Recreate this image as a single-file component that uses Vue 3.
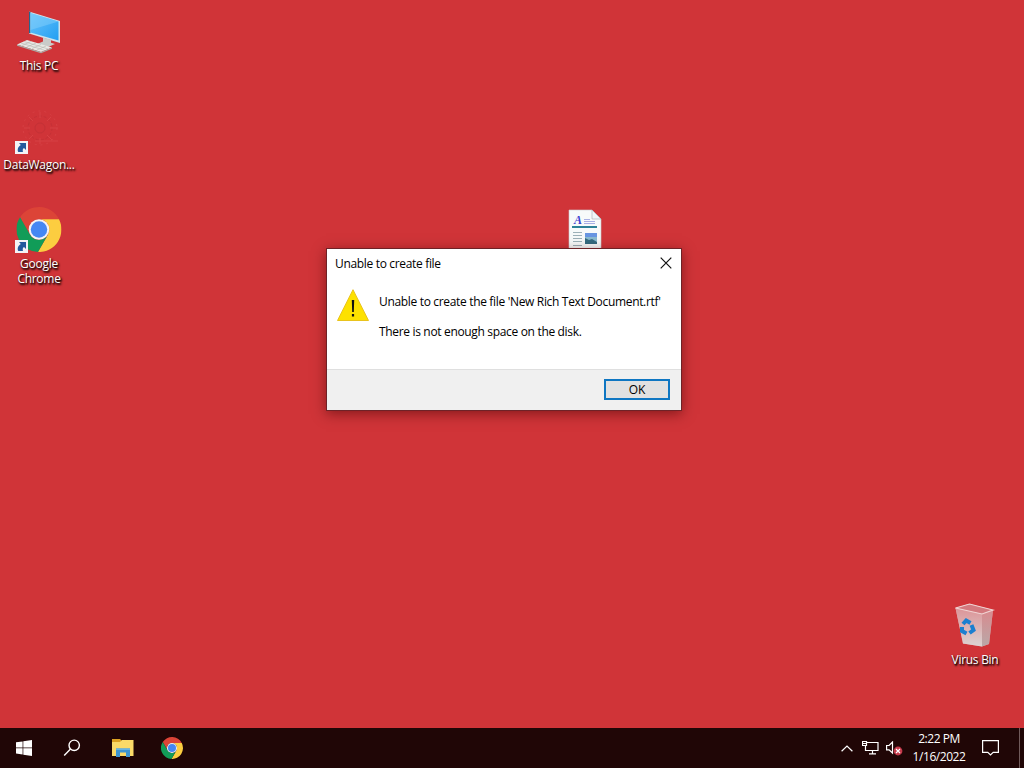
<template>
  <div class="screen">
    <!-- shared shapes -->
    <svg class="defs" aria-hidden="true">
      <symbol id="chrome" viewBox="0 0 48 48">
        <path fill="#dc4437" d="M24 13H45.3A24 24 0 0 0 3.8 11L14.5 29.5A11 11 0 0 1 24 13Z" />
        <path fill="#fccd40" d="M33.5 29.5L22.9 48A24 24 0 0 0 45.3 13H24A11 11 0 0 1 33.5 29.5Z" />
        <path fill="#119c58" d="M14.5 29.5L3.8 11A24 24 0 0 0 22.9 48L33.5 29.5A11 11 0 0 1 14.5 29.5Z" />
        <circle cx="24" cy="24" r="11" fill="#f4f4f4" />
        <circle cx="24" cy="24" r="8.8" fill="#4587f3" />
      </symbol>
      <symbol id="shortcut" viewBox="0 0 13 13">
        <path fill="#f3f3f5" d="M0 0h13v13H0z" />
        <path fill="#23599c" d="M4 2h7v7L9 7C7.500 8 7.500 9.500 8 11H3.300C2 8.500 3 5.500 5.800 3.900z" />
      </symbol>
    </svg>

    <main class="desktop">
      <div class="item" :class="item.id" v-for="item in items" :key="item.id">
        <svg class="icon" viewBox="0 0 48 48">
          <g v-if="item.id === 'pc'" transform="translate(-1 0)">
            <path fill="#cfe3ec" d="M15 3.500L46 13v22L15 25.500z" />
            <path fill="#28658c" d="M15 3.500l1.500.5v21.300l-1.500-.4z" />
            <path fill="url(#pcScreen)" d="M16.500 5L44.500 13.500v19L16.500 24.500z" />
            <path fill="#8ad2fb" opacity=".45" d="M16.500 5L44.500 13.500 16.500 22z" />
            <path fill="#c9cbc9" d="M29 29.500l8 2.300v3l4 1.200-7 3-11-3 6-2.600z" />
            <path fill="#e8e8e4" d="M13 32l25 7.500-11 4.500L3 36.500z" />
            <path fill="#a9aaa6" d="M3 36.500L27 44l11-4.500v1.200L27 45.300 3 37.700z" />
            <path
              stroke="#b5b5b0"
              stroke-width=".6"
              fill="none"
              d="M10 33.500l24 7.400M7 35l23 7.100M17 33.500l-9 4M22 35l-9 4M27 36.500l-9 4M32 38l-9 4"
            />
          </g>
          <g v-else-if="item.id === 'wagon'" fill="none" stroke="#bd3036" stroke-width="1" opacity=".6">
            <circle cx="25" cy="21" r="12" stroke-dasharray="3 2" />
            <circle cx="25" cy="21" r="17" stroke="#dc4a4d" stroke-dasharray="2 4" />
            <circle cx="25" cy="21" r="5" />
            <path stroke="#dc4a4d" d="M25 5v6M25 31v6M9 21h6M35 21h8M14 10l4 4M32 28l5 5M36 10l-4 4M18 28l-4 4" />
            <path stroke="#dc4a4d" d="M20 34h23" />
          </g>
          <use v-else-if="item.id === 'browser'" href="#chrome" x="1.500" y="1" width="45" height="45" />
          <g v-else-if="item.id === 'rtf'">
            <path fill="#f7fafa" stroke="#c9cfd2" stroke-width=".6" d="M8 3h23l9 9v34H8z" />
            <path fill="#f1f6f8" stroke="#a1acb3" stroke-width=".6" d="M31 3v9h9z" />
            <text x="13" y="17" class="letter">A</text>
            <path stroke="#939ce0" stroke-width=".8" d="M23 12.500h6M23 14.500h11M23 16.500h11" />
            <path fill="#2c8197" d="M11 19h25v2H11z" />
            <path stroke="#9cb1b8" d="M12 25.500h9M12 28.500h9M12 31.500h9M12 34.500h9M12 38.500h9" />
            <path fill="#6896e2" d="M24 26h12v4H24z" />
            <path fill="#8abbd0" d="M24 30h12v7H24z" />
            <path fill="#346b80" d="M24 31l4 2 3-1 5 3v2H24z" />
          </g>
          <g v-else transform="translate(-.5 0)">
            <path fill="#df9ea0" d="M5 6l14-4 23.500 6-4 34-7 2.500-19-3z" />
            <path fill="#d3797e" d="M5 6l14-4 23.500 6-11 4z" />
            <path fill="url(#binFace)" d="M5 6l26.500 6v32.500l-19-3z" />
            <path fill="url(#binSide)" d="M31.500 12l11-4-4 34-7 2.500z" />
            <path fill="none" stroke="#f0d4d3" stroke-width="1.200" d="M5 6l14-4 23.500 6-11 4z" />
            <g fill="none" stroke="#1c7fd0" stroke-width="4">
              <path d="M12.500 22l3.200-3.500 4.300 2.500" />
              <path d="M21 23l2 5-4 3" />
              <path d="M16 31.500l-4.500-2.500V25" />
            </g>
          </g>
          <defs>
            <linearGradient id="pcScreen" x1="0" y1="0" x2="1" y2="1">
              <stop offset="0" stop-color="#67c2fb" />
              <stop offset="1" stop-color="#239ff2" />
            </linearGradient>
            <linearGradient id="binFace" x1="0" y1="0" x2="0" y2="1">
              <stop offset="0" stop-color="#dc9498" />
              <stop offset="1" stop-color="#dcd3d2" />
            </linearGradient>
            <linearGradient id="binSide" x1="0" y1="0" x2="0" y2="1">
              <stop offset="0" stop-color="#d98a8e" />
              <stop offset="1" stop-color="#b9a8a8" />
            </linearGradient>
          </defs>
          <use v-if="item.shortcut" href="#shortcut" x="0" y="34" width="13" height="13" />
        </svg>
        <span class="label" v-for="line in item.lines" :key="line">{{ line }}</span>
      </div>

      <section v-if="open" class="dialog" role="alertdialog">
        <header class="titleBar">
          <span>Unable to create file</span>
          <button class="close" type="button" aria-label="Close" @click="open = false">
            <svg viewBox="0 0 12 12" width="12" height="12">
              <path d="M.7.7l10.600 10.600M11.300.7L.7 11.300" stroke="#111" stroke-width="1.200" />
            </svg>
          </button>
        </header>
        <div class="content">
          <svg class="warning" viewBox="0 0 32 32">
            <path fill="#fde100" stroke="#e7bd12" stroke-width=".9" stroke-linejoin="round" d="M16 .7L31.500 31.500H.5z" />
            <path fill="#111" d="M14.800 11h2.400l-.4 12h-1.600zM14.900 25h2.200v2.500h-2.200z" />
          </svg>
          <div class="message">
            <p>Unable to create the file 'New Rich Text Document.rtf'</p>
            <p>There is not enough space on the disk.</p>
          </div>
        </div>
        <footer class="actions">
          <button class="ok" type="button" @click="open = false">OK</button>
        </footer>
      </section>
    </main>

    <nav class="taskbar">
      <button class="task" type="button" aria-label="Start">
        <svg viewBox="0 0 16 16" width="16" height="16" fill="#fff">
          <path d="M0 2.300l6.600-.9v6.200H0zM7.300 1.300L16 0v7.600H7.300zM0 8.300h6.600v6.200L0 13.600zM7.300 8.300H16V16l-8.700-1.300z" />
        </svg>
      </button>
      <button class="task" type="button" aria-label="Search">
        <svg viewBox="0 0 18 18" width="18" height="18" fill="none" stroke="#fff" stroke-width="1.400">
          <circle cx="11.200" cy="6.300" r="5.200" />
          <path d="M7.500 10L1.200 16.500" />
        </svg>
      </button>
      <button class="task explorer" type="button" aria-label="File Explorer">
        <svg viewBox="0 0 22 18" width="22" height="18">
          <path fill="#dda222" d="M0 0h8l2 2h11v4H0z" />
          <path fill="#fbda68" d="M0 3h8l2-2h11.500v16H0z" />
          <path fill="#3d94d1" d="M4 9.500h14V18h-4v-4.500H8V18H4z" />
          <path fill="#67b5e4" d="M4 9.500h14v1.500H4z" />
        </svg>
      </button>
      <button class="task" type="button" aria-label="Google Chrome">
        <svg width="22" height="22"><use href="#chrome" width="22" height="22" /></svg>
      </button>

      <div class="tray">
        <svg class="chevron" viewBox="0 0 12 7" width="12" height="7">
          <path d="M.6 6.300L6 1l5.400 5.300" />
        </svg>
        <svg class="network" viewBox="0 0 17 14" width="17" height="14">
          <path d="M5 1.500h11v8H3.500V5M10.500 9.500v3M7 12.800h7M.5.500h4v4h-4zM1 2.500h3" />
        </svg>
        <svg class="sound" viewBox="0 0 17 15" width="17" height="15">
          <path d="M.6 4.500h2.500L6.500 1v11L3.100 8.800H.6z" />
          <circle cx="12" cy="10" r="4.400" fill="#c63a4b" stroke="none" />
          <path d="M10 8l4 4M14 8l-4 4" />
        </svg>
        <div class="clock">
          <span>{{ time }}</span>
          <span>{{ date }}</span>
        </div>
        <svg class="notify" viewBox="0 0 17 16" width="17" height="16">
          <path d="M.6.6h15.800v11.800h-5.200L8.500 15l-2.700-2.600H.6z" />
        </svg>
        <div class="peek"></div>
      </div>
    </nav>
  </div>
</template>

<script setup>
import { ref } from "vue";

const open = ref(true);
const time = ref("2:22 PM");
const date = ref("1/16/2022");

const items = [
  { id: "pc", lines: ["This PC"] },
  { id: "wagon", lines: ["DataWagon..."], shortcut: true },
  { id: "browser", lines: ["Google", "Chrome"], shortcut: true },
  { id: "rtf", lines: [] },
  { id: "bin", lines: ["Virus Bin"] },
];
</script>

<style>
body {
  margin: 0;
  overflow: hidden;
}
</style>

<style scoped>
.screen {
  display: flex;
  flex-direction: column;
  width: 1024px;
  height: 768px;
  overflow: hidden;
  background: #d03438;
  font-family: "Open Sans", "Noto Sans", sans-serif;
  font-size: 12px;
  color: #000;
}

.defs {
  position: absolute;
  width: 0;
  height: 0;
}

.desktop {
  position: relative;
  flex: 1;
}

/* Desktop items */
.item {
  position: absolute;
  display: flex;
  flex-direction: column;
  align-items: center;
  width: 76px;
}

.pc {
  left: 1px;
  top: 8px;
}

.wagon {
  left: 1px;
  top: 107px;
}

.browser {
  left: 1px;
  top: 206px;
}

.rtf {
  left: 547px;
  top: 207px;
}

.bin {
  left: 937px;
  top: 602px;
}

.icon {
  width: 48px;
  height: 48px;
  margin-bottom: 2px;
}

.letter {
  font: italic bold 12px "Liberation Serif", serif;
  fill: #3b3fd0;
}

.label {
  line-height: 15px;
  color: #fff;
  letter-spacing: -0.28px;
  white-space: nowrap;
  text-shadow: 1px 1px 2px #000, 1px 2px 2px rgba(0, 0, 0, 0.8);
}

/* Dialog */
.dialog {
  position: absolute;
  left: 326px;
  top: 248px;
  display: flex;
  flex-direction: column;
  box-sizing: border-box;
  width: 356px;
  height: 163px;
  border: 1px solid #6e2227;
  background: #fff;
  box-shadow: 0 3px 12px rgba(60, 0, 0, 0.5);
  letter-spacing: -0.33px;
}

.titleBar {
  display: flex;
  justify-content: space-between;
  align-items: center;
  height: 28px;
  padding: 0 9px 0 8px;
}

button {
  padding: 0;
  border: 0;
  background: none;
  font: inherit;
  color: inherit;
}

.close {
  display: flex;
}

.content {
  display: flex;
  flex: 1;
  padding: 12px 10px 0;
}

.warning {
  width: 32px;
  height: 32px;
  margin-right: 10px;
}

.message p {
  margin: 5px 0 14px;
  line-height: 16px;
  white-space: nowrap;
}

.message p + p {
  margin-top: 0;
}

.actions {
  display: flex;
  justify-content: flex-end;
  align-items: flex-start;
  box-sizing: border-box;
  height: 41px;
  padding: 9px 11px 0 0;
  border-top: 1px solid #dfdfdf;
  background: #f0f0f0;
}

.ok {
  width: 66px;
  height: 21px;
  border: 2px solid #0e76c2;
  background: #e1e1e1;
  line-height: 17px;
}

/* Taskbar */
.taskbar {
  display: flex;
  height: 40px;
  background: #200606;
}

.task {
  display: flex;
  justify-content: center;
  align-items: center;
  width: 48px;
}

.explorer {
  width: 54px;
}

.explorer + .task {
  width: 44px;
}

.tray {
  display: flex;
  align-items: center;
  margin-left: auto;
  color: #fff;
}

.tray svg {
  fill: none;
  stroke: #fff;
  stroke-width: 1.2;
}

.network {
  margin-left: 9px;
}

.sound {
  margin-left: 7px;
}

.clock {
  display: flex;
  flex-direction: column;
  align-items: center;
  width: 72px;
  line-height: 18px;
  letter-spacing: -0.45px;
  white-space: nowrap;
}

.notify {
  margin-left: 7px;
}

.peek {
  height: 40px;
  margin-left: 20px;
  margin-right: 4px;
  border-left: 1px solid #705a5a;
}
</style>
